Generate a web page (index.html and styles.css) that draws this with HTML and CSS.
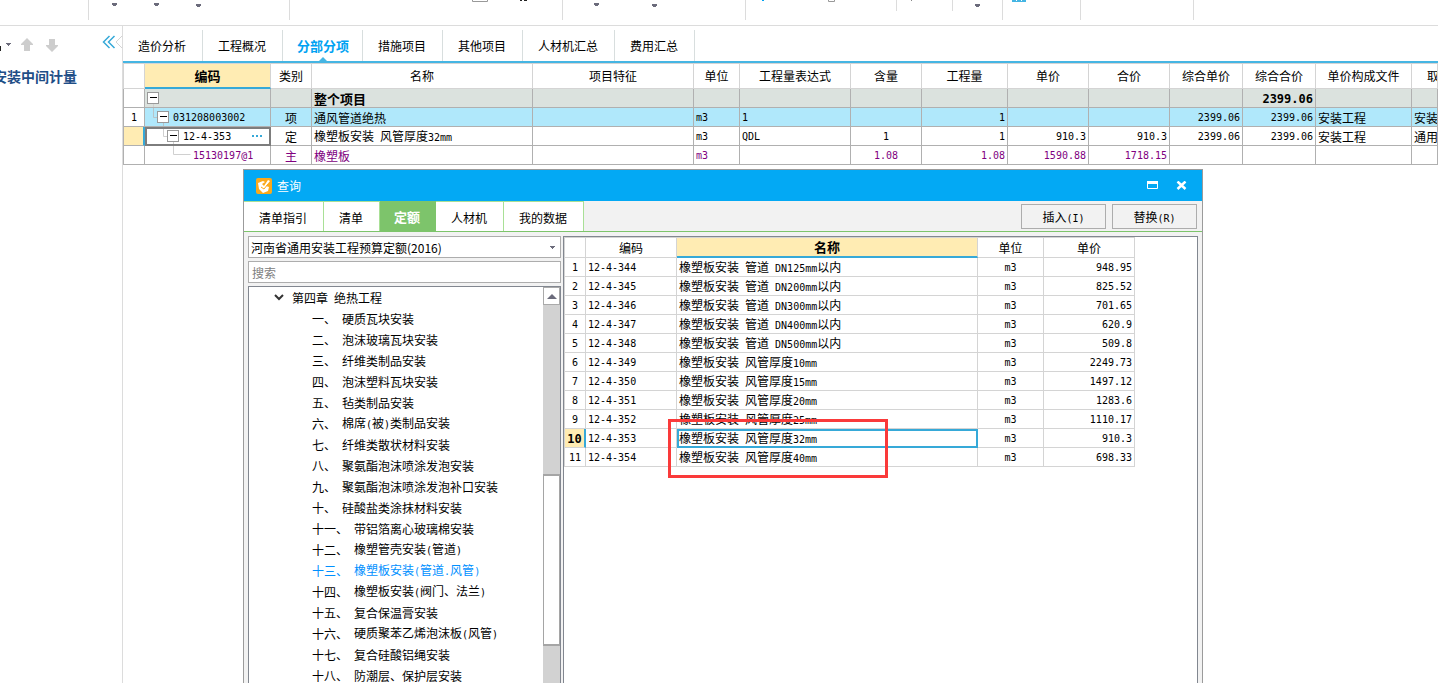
FILE: index.html
```html
<!DOCTYPE html>
<html lang="zh-CN">
<head>
<meta charset="utf-8">
<title>分部分项</title>
<link rel="stylesheet" href="styles.css">
</head>
<body>
<div class="app">
  <header class="ribbon">
    <div class="group g-88"></div>
    <div class="group g-200"><svg width="200" height="20"><g fill="#6b6b7b"><path d="M23 3h5v2h-1v1h-3v-1h-1z"/><path d="M65 3h5v2h-1v1h-3v-1h-1z"/><path d="M107 4h5v2h-1v1h-3v-1h-1z"/></g></svg></div>
    <div class="group g-272"><svg width="272" height="20"><path d="M182.500 0v1.500h15v-1.500" fill="none" stroke="#999"/><path d="M230 0h2v1h-2zM234 0h3v1h-3z" fill="#222"/></svg></div>
    <div class="group g-182"><svg width="182" height="20"><g fill="#6b6b7b"><path d="M31 3h5v2h-1v1h-3v-1h-1z"/><path d="M89 4h5v2h-1v1h-3v-1h-1z"/></g></svg></div>
    <div class="group g-150 short"><svg width="150" height="11"><path d="M16 0h2v1h-2z" fill="#00a2f2"/><path d="M82.500 0v1.500h6v-1.500" fill="none" stroke="#999"/></svg></div>
    <div class="group g-55 short"><svg width="55" height="11"><path d="M14 0h1v1h-1z" fill="#888"/></svg></div>
    <div class="group g-49"><svg width="49" height="20"><path d="M22 4h5v2h-1v1h-3v-1h-1z" fill="#6b6b7b"/></svg></div>
    <div class="group g-77"><svg width="77" height="20"><path d="M9 0h14v2h-14z" fill="#45b5e3"/><path d="M13 0h1v1h-1zM18 0h1v1h-1z" fill="#fff"/></svg></div>
    <div class="group g-112"></div>
  </header>

  <div class="main">
    <aside class="side">
      <div class="side-tools">
        <button class="plain" aria-label="更多"><svg width="14" height="16"><path d="M0 9h1v5h-1z" fill="#222"/><path d="M6 6h5v1h-1v1h-1v1h-1v-1h-1v-1h-1z" fill="#6b6b7b"/></svg></button>
        <button class="plain up" aria-label="上移"><svg width="12" height="14"><path d="M6 0l6 6v1h-3v6h-6v-6h-3v-1z" fill="#cdcdcd"/></svg></button>
        <button class="plain down" aria-label="下移"><svg width="12" height="14"><path d="M6 14l-6-6v-1h3v-6h6v6h3v1z" fill="#cdcdcd"/></svg></button>
        <button class="plain fold" aria-label="收起"><svg width="20" height="16"><path d="M7.500 1l-6 6 6 6M12.500 1l-6 6 6 6" fill="none" stroke="#36a9d8" stroke-width="1.500"/><path d="M20 1l-6 6 6 6" fill="none" stroke="#d4d4d4"/></svg></button>
      </div>
      <div class="project">安装中间计量</div>
    </aside>

    <section class="work">
      <nav class="tabs">
        <button>造价分析</button><button>工程概况</button><button class="on">分部分项<svg class="mark" width="8" height="4"><path d="M4 0l4 4h-8z" fill="#45b5e3"/></svg></button><button>措施项目</button><button>其他项目</button><button>人材机汇总</button><button>费用汇总</button>
      </nav>
      <table class="grid">
        <colgroup><col class="w22"><col class="w126"><col class="w41"><col class="w221"><col class="w161"><col class="w46"><col class="w111"><col class="w71"><col class="w86"><col class="w81"><col class="w81"><col class="w73"><col class="w73"><col class="w96"><col></colgroup>
        <thead><tr><th></th><th class="sel">编码</th><th>类别</th><th>名称</th><th>项目特征</th><th>单位</th><th>工程量表达式</th><th>含量</th><th>工程量</th><th>单价</th><th>合价</th><th>综合单价</th><th>综合合价</th><th>单价构成文件</th><th class="cut">取</th></tr></thead>
        <tbody>
          <tr class="total"><td></td><td class="tree"><div><svg width="16" height="18"><path d="M8.500 15v3" stroke="#d0d0d0"/><rect x="2.500" y="3.500" width="11" height="11" fill="#fff" stroke="#999"/><path d="M5 8.500h7" stroke="#000"/></svg></div></td><td></td><td>整个项目</td><td></td><td></td><td></td><td></td><td></td><td></td><td></td><td></td><td class="r m">2399.06</td><td></td><td></td></tr>
          <tr class="item"><td class="c m">1</td><td class="tree m"><div><svg width="26" height="18"><path d="M8.500 0v9.500h4M18.500 15v3" fill="none" stroke="#b8c4c8"/><rect x="12.500" y="3.500" width="11" height="11" fill="#fff" stroke="#999"/><path d="M15 8.500h7" stroke="#000"/></svg><span>031208003002</span></div></td><td class="c">项</td><td>通风管道绝热</td><td></td><td class="m">m3</td><td class="m">1</td><td></td><td class="r m">1</td><td></td><td></td><td class="r m">2399.06</td><td class="r m">2399.06</td><td>安装工程</td><td>安装</td></tr>
          <tr><td class="mark-y"></td><td class="tree m cursor"><div><svg width="36" height="18"><path d="M18.500 0v9.500h4M28.500 15v3" fill="none" stroke="#d0d0d0"/><rect x="22.500" y="3.500" width="11" height="11" fill="#fff" stroke="#999"/><path d="M25 8.500h7" stroke="#000"/></svg><span>12-4-353</span><button class="plain dots" aria-label="选择"><svg width="11" height="2"><path d="M0 0h2v2h-2zM4 0h2v2h-2zM8 0h2v2h-2z" fill="#36a9d8"/></svg></button></div></td><td class="c">定</td><td>橡塑板安装<span class="m"> </span>风管厚度<span class="m">32mm</span></td><td></td><td class="m">m3</td><td class="m">QDL</td><td class="c m">1</td><td class="r m">1</td><td class="r m">910.3</td><td class="r m">910.3</td><td class="r m">2399.06</td><td class="r m">2399.06</td><td>安装工程</td><td>通用</td></tr>
          <tr class="material"><td></td><td class="tree m"><div><svg width="46" height="18"><path d="M28.500 0v8.500h17" fill="none" stroke="#d0d0d0"/></svg><span>15130197@1</span></div></td><td class="c">主</td><td>橡塑板</td><td></td><td class="m">m3</td><td></td><td class="c m">1.08</td><td class="r m">1.08</td><td class="r m">1590.88</td><td class="r m">1718.15</td><td></td><td></td><td></td><td></td></tr>
        </tbody>
      </table>
    </section>
  </div>

  <section class="dialog" role="dialog" aria-label="查询">
    <div class="title">
      <svg width="16" height="16"><rect width="16" height="16" rx="2" fill="#fba91b"/><path d="M2 5l5-2 2 1-3 2 2 2 4-6 2 1-4 5 3 1-1 4-5 2-4-4z" fill="#fff"/><path d="M5 9l3 2 4-5" fill="none" stroke="#fba91b"/></svg>
      <span>查询</span>
      <button class="plain max" aria-label="最大化"><svg width="12" height="9"><path d="M.5.500h10v7h-10z" fill="none" stroke="#fff"/><path d="M0 0h11v3h-11z" fill="#fff"/></svg></button>
      <button class="plain" aria-label="关闭"><svg width="12" height="9"><path d="M1.500.500l8 7.500M9.500.500l-8 7.500" stroke="#fff" stroke-width="2.500"/></svg></button>
    </div>
    <div class="bar">
      <nav class="subtabs"><button>清单指引</button><button>清单</button><button class="on">定额</button><button>人材机</button><button>我的数据</button></nav>
      <div class="actions"><button>插入<span class="s">(I)</span></button><button>替换<span class="s">(R)</span></button></div>
    </div>
    <div class="panes">
      <div class="left">
        <div class="combo"><select aria-label="定额库"><option>河南省通用安装工程预算定额(2016)</option></select><svg width="5" height="3"><path d="M0 0h5v1h-1v1h-1v1h-1v-1h-1v-1h-1z" fill="#6b6b7b"/></svg></div>
        <input class="search" type="text" placeholder="搜索" aria-label="搜索">
        <div class="treebox">
          <ul class="chapters">
            <li class="head"><svg width="10" height="7"><path d="M1 1l4 4 4-4" fill="none" stroke="#333" stroke-width="2"/></svg><span>第四章</span><span>绝热工程</span></li>
            <li><span>一、</span><span>硬质瓦块安装</span></li>
            <li><span>二、</span><span>泡沫玻璃瓦块安装</span></li>
            <li><span>三、</span><span>纤维类制品安装</span></li>
            <li><span>四、</span><span>泡沫塑料瓦块安装</span></li>
            <li><span>五、</span><span>毡类制品安装</span></li>
            <li><span>六、</span><span>棉席<span class="s">(</span>被<span class="s">)</span>类制品安装</span></li>
            <li><span>七、</span><span>纤维类散状材料安装</span></li>
            <li><span>八、</span><span>聚氨酯泡沫喷涂发泡安装</span></li>
            <li><span>九、</span><span>聚氨酯泡沫喷涂发泡补口安装</span></li>
            <li><span>十、</span><span>硅酸盐类涂抹材料安装</span></li>
            <li><span>十一、</span><span>带铝箔离心玻璃棉安装</span></li>
            <li><span>十二、</span><span>橡塑管壳安装<span class="s">(</span>管道<span class="s">)</span></span></li>
            <li class="on"><span>十三、</span><span>橡塑板安装<span class="s">(</span>管道<span class="s">.</span>风管<span class="s">)</span></span></li>
            <li><span>十四、</span><span>橡塑板安装<span class="s">(</span>阀门、法兰<span class="s">)</span></span></li>
            <li><span>十五、</span><span>复合保温膏安装</span></li>
            <li><span>十六、</span><span>硬质聚苯乙烯泡沫板<span class="s">(</span>风管<span class="s">)</span></span></li>
            <li><span>十七、</span><span>复合硅酸铝绳安装</span></li>
            <li><span>十八、</span><span>防潮层、保护层安装</span></li>
          </ul>
          <div class="scroll"><button class="plain" aria-label="向上滚动"><svg width="10" height="5"><path d="M5 0l5 5h-10z" fill="#6b6b7b"/></svg></button><div class="thumb"></div></div>
        </div>
      </div>
      <div class="right">
        <table class="list">
          <colgroup><col class="w22"><col class="w91"><col class="w301"><col class="w66"><col class="w91"></colgroup>
          <thead><tr><th></th><th>编码</th><th class="sel">名称</th><th>单位</th><th>单价</th></tr></thead>
          <tbody>
            <tr><td class="c m">1</td><td class="m">12-4-344</td><td>橡塑板安装<span class="m"> </span>管道<span class="m"> DN125mm</span>以内</td><td class="c m">m3</td><td class="r m">948.95</td></tr>
            <tr><td class="c m">2</td><td class="m">12-4-345</td><td>橡塑板安装<span class="m"> </span>管道<span class="m"> DN200mm</span>以内</td><td class="c m">m3</td><td class="r m">825.52</td></tr>
            <tr><td class="c m">3</td><td class="m">12-4-346</td><td>橡塑板安装<span class="m"> </span>管道<span class="m"> DN300mm</span>以内</td><td class="c m">m3</td><td class="r m">701.65</td></tr>
            <tr><td class="c m">4</td><td class="m">12-4-347</td><td>橡塑板安装<span class="m"> </span>管道<span class="m"> DN400mm</span>以内</td><td class="c m">m3</td><td class="r m">620.9</td></tr>
            <tr><td class="c m">5</td><td class="m">12-4-348</td><td>橡塑板安装<span class="m"> </span>管道<span class="m"> DN500mm</span>以内</td><td class="c m">m3</td><td class="r m">509.8</td></tr>
            <tr><td class="c m">6</td><td class="m">12-4-349</td><td>橡塑板安装<span class="m"> </span>风管厚度<span class="m">10mm</span></td><td class="c m">m3</td><td class="r m">2249.73</td></tr>
            <tr><td class="c m">7</td><td class="m">12-4-350</td><td>橡塑板安装<span class="m"> </span>风管厚度<span class="m">15mm</span></td><td class="c m">m3</td><td class="r m">1497.12</td></tr>
            <tr><td class="c m">8</td><td class="m">12-4-351</td><td>橡塑板安装<span class="m"> </span>风管厚度<span class="m">20mm</span></td><td class="c m">m3</td><td class="r m">1283.6</td></tr>
            <tr><td class="c m">9</td><td class="m">12-4-352</td><td>橡塑板安装<span class="m"> </span>风管厚度<span class="m">25mm</span></td><td class="c m">m3</td><td class="r m">1110.17</td></tr>
            <tr><td class="c m mark-y">10</td><td class="m">12-4-353</td><td class="focus">橡塑板安装<span class="m"> </span>风管厚度<span class="m">32mm</span></td><td class="c m">m3</td><td class="r m">910.3</td></tr>
            <tr><td class="c m">11</td><td class="m">12-4-354</td><td>橡塑板安装<span class="m"> </span>风管厚度<span class="m">40mm</span></td><td class="c m">m3</td><td class="r m">698.33</td></tr>
          </tbody>
        </table>
        <div class="callout"></div>
      </div>
    </div>
  </section>
</div>
</body>
</html>
```

FILE: styles.css
```css
* { box-sizing: border-box; }
body, button, input, select {
  font-family: "Noto Sans CJK SC", sans-serif;
  font-size: 12px;
  color: #000;
}
body { margin: 0; background: #fff; line-height: 16px; }
button { cursor: pointer; }
svg { display: block; flex: none; }
.app { position: relative; height: 100vh; overflow: hidden; display: flex; flex-direction: column; }
.plain { border: 0; background: none; padding: 0; display: block; }
.m { font-family: "DejaVu Sans Mono", monospace; font-size: 10px; white-space: pre; }
.s { font-family: "DejaVu Sans Mono", monospace; font-size: 10px; }

/* ribbon */
.ribbon { display: flex; flex: none; height: 26px; border-bottom: 1px solid #dcdcdc; }
.group { box-sizing: content-box; flex: none; height: 20px; border-right: 1px solid #dcdcdc; }
.group.short { height: 11px; }
.g-88 { width: 88px; }
.g-200 { width: 200px; }
.g-272 { width: 272px; }
.g-182 { width: 182px; }
.g-150 { width: 150px; }
.g-55 { width: 55px; }
.g-49 { width: 49px; }
.g-77 { width: 77px; }
.g-112 { width: 112px; }

/* side panel */
.main { display: flex; flex: 1; min-height: 0; }
.side { width: 123px; flex: none; border-right: 1px solid #dcdcdc; overflow: hidden; }
.side-tools { display: flex; align-items: center; height: 36px; padding-top: 1px; }
.up { margin-left: 7px; }
.down { margin-left: 13px; }
.fold { margin-left: auto; padding-bottom: 4px; }
.project { display: flex; justify-content: flex-end; width: 77px; padding-top: 6px; font-size: 14px; font-weight: bold; color: #1f4e87; white-space: nowrap; }

/* page tabs */
.work { flex: 1; min-width: 0; overflow: hidden; }
.tabs { display: flex; padding-top: 4px; border-bottom: 2px solid #45b5e3; }
.tabs button { position: relative; height: 31px; border: 0; border-right: 1px solid #d8dede; background: #fff; padding: 0 16px 0 15px; white-space: nowrap; }
.tabs .on { font-size: 13px; font-weight: bold; color: #00a2f2; padding: 0 13px 0 14px; }
.mark { position: absolute; left: 36px; bottom: 0; }

/* tables */
table { table-layout: fixed; border-collapse: separate; border-spacing: 0; }
th, td { padding: 0 2px; border: 0 solid #b0b0b0; border-width: 0 1px 1px 0; white-space: nowrap; overflow: hidden; text-align: left; line-height: 16px; }
td { height: 19px; padding-top: 2px; line-height: 12px; }
th { font-weight: normal; text-align: center; border-color: #d4d4d4; }
th:first-child, td:first-child { border-left-width: 1px; }
.c { text-align: center; }
.r { text-align: right; }
th.sel { background: #ffecb3; font-size: 13px; font-weight: bold; border-bottom: 2px solid #36a9d8; }
td.mark-y { background: #ffecb3; border-right: 2px solid #36a9d8; font-size: 12px; font-weight: bold; padding: 2px 0 0; }
.grid { width: 100%; }
.grid th { height: 26px; border-top: 1px solid #d4d4d4; }
.grid .cut { text-align: left; padding-left: 15px; }
.grid .total td { background: #dbe2de; font-size: 13px; font-weight: bold; }
.grid .total td.m { font-size: 12px; }
.grid .total td:first-child { background: #fff; }
.grid .item td { background: #b0e8fb; }
.grid .item td:first-child { background: #fff; }
.grid .material td { color: #800080; }
td.tree { padding: 0; }
.tree div { display: flex; align-items: center; height: 18px; gap: 2px; }
.tree span { padding-top: 2px; }
.cursor { outline: 2px solid #7d7d7d; outline-offset: -2px; }
.dots { margin-left: auto; margin-right: 7px; }
.w22 { width: 22px; } .w41 { width: 41px; } .w46 { width: 46px; } .w66 { width: 66px; }
.w71 { width: 71px; } .w73 { width: 73px; } .w81 { width: 81px; } .w86 { width: 86px; }
.w91 { width: 91px; } .w96 { width: 96px; } .w111 { width: 111px; } .w126 { width: 126px; }
.w161 { width: 161px; } .w221 { width: 221px; } .w301 { width: 301px; }

/* floating query window */
.dialog { position: absolute; left: 243px; right: 235px; top: 169px; bottom: 0; display: flex; flex-direction: column; border: 1px solid #9b9b9b; border-bottom: 0; background: #f2f2f2; }
.title { display: flex; align-items: center; flex: none; height: 31px; padding: 0 14px 0 12px; gap: 5px; background: #03a9f4; color: #fff; }
.title .max { margin-left: auto; margin-right: 12px; }
.bar { display: flex; justify-content: space-between; flex: none; height: 31px; border-bottom: 1px solid #7dc46b; }
.subtabs { display: flex; }
.subtabs button { height: 30px; border: 0; border-top: 1px solid #a9e096; border-right: 1px solid #a9e096; background: #fff; padding: 1px 16px 0 15px; white-space: nowrap; }
.subtabs .on { background: #7dc46b; border-color: #7dc46b; color: #fff; font-size: 13px; font-weight: bold; padding: 0 15px 0 14px; }
.actions { display: flex; gap: 6px; padding: 3px 5px 0 0; }
.actions button { width: 85px; height: 25px; border: 1px solid #adadad; background: #f2f2f2; padding: 0; }
.panes { display: flex; flex: 1; min-height: 0; gap: 2px; padding: 4px 4px 0; }
.left { display: flex; flex-direction: column; flex: none; width: 313px; }
.combo { position: relative; margin-bottom: 3px; }
.combo select { display: block; width: 100%; height: 22px; appearance: none; border: 1px solid #adadad; border-radius: 0; background: #fff; padding: 0 2px; }
.combo svg { position: absolute; right: 6px; top: 10px; pointer-events: none; }
.search { height: 22px; border: 1px solid #adadad; padding: 0 3px; margin-bottom: 3px; background: #fff; }
.search::placeholder { color: #808080; }
.treebox { display: flex; flex: 1; min-height: 0; border: 1px solid #828790; border-bottom: 0; background: #fff; }
.chapters { flex: 1; margin: 0; padding: 0; list-style: none; overflow: hidden; }
.chapters li { display: flex; align-items: center; height: 21px; gap: 6px; padding-left: 63px; white-space: nowrap; }
.chapters .head { padding-left: 25px; }
.chapters .head svg { margin-right: 2px; }
.chapters .on { color: #0090ff; }
.scroll { display: flex; flex-direction: column; flex: none; width: 17px; background: #d2d2d2; }
.scroll button { display: flex; align-items: center; justify-content: center; height: 18px; border: 1px solid #aaa; background: #fff; }
.thumb { height: 172px; margin-top: 169px; border: 1px solid #a5a5a5; border-width: 2px 1px; background: #fff; }
.right { position: relative; flex: 1; border: 1px solid #828790; border-bottom: 0; background: #fff; }
.list { width: 571px; }
.list th { height: 21px; border-top: 1px solid #d4d4d4; }
.list td { border-color: #d4d4d4; }
.list .mark-y { border-right-color: #36a9d8; }
.focus { outline: 2px solid #36a9d8; outline-offset: -2px; }
.callout { position: absolute; left: 104px; top: 182px; width: 220px; height: 59px; border: 3px solid #fa3a3a; }
```
